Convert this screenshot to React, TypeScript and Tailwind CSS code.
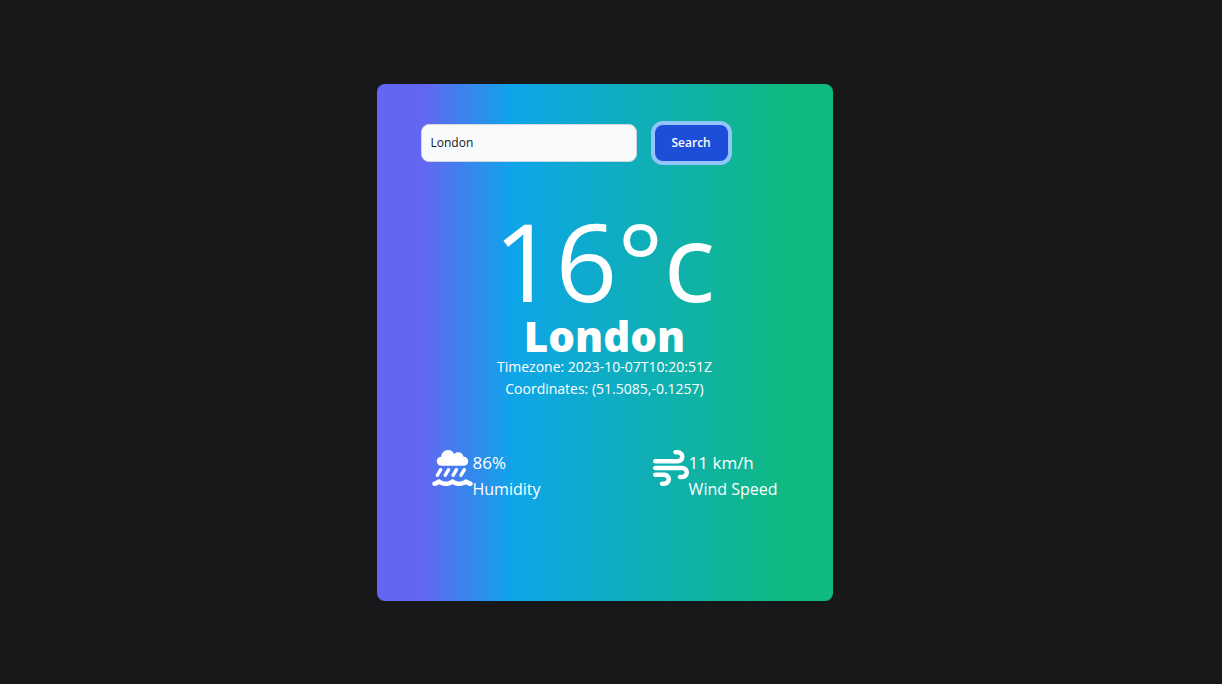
import { useState } from "react";
import { FaCloudShowersWater, FaWind } from "react-icons/fa6";
import type { IconType } from "react-icons";

type StatProps = { icon: IconType; iconClass: string; value: string; label: string };

function Stat({ icon: Icon, iconClass, value, label }: StatProps) {
  return (
    <div className="flex items-start">
      <Icon aria-hidden="true" className={iconClass} />
      <div className="text-base leading-[26px]">
        <p className="text-[17px]">{value}</p>
        <p>{label}</p>
      </div>
    </div>
  );
}

export default function App() {
  const [city, setCity] = useState("London");

  return (
    <main className="flex min-h-screen items-center justify-center bg-[#18181a] pr-[13px] font-['Open_Sans','Noto_Sans',sans-serif] text-white">
      <section className="w-full max-w-[456px] rounded-lg bg-linear-to-r/srgb from-[#6366f1] from-10% via-[#0ea5e9] via-30% to-[#10b981] to-90% px-11 pt-10 pb-[99px]">
        <form className="flex items-center gap-[18px]" onSubmit={(event) => event.preventDefault()}>
          <input
            type="text"
            aria-label="City"
            value={city}
            onChange={(event) => setCity(event.target.value)}
            className="h-[38px] w-[216px] rounded-lg border border-gray-300 bg-[#f9fafb] px-[9px] text-xs text-[#111827] outline-none"
          />
          <button
            type="submit"
            className="h-9 rounded-lg bg-[#1d4ed8] px-[17px] text-xs font-semibold text-white ring-4 ring-[#93c5fd]"
          >
            Search
          </button>
        </form>

        <div className="mt-[42px] text-center">
          <p className="text-[108px] leading-[114px]">16°c</p>
          <h1 className="pb-0.5 text-[42px] leading-9 font-extrabold">London</h1>
          <p className="text-sm leading-[22px]">Timezone: 2023-10-07T10:20:51Z</p>
          <p className="text-sm leading-[22px]">Coordinates: (51.5085,-0.1257)</p>
        </div>

        <div className="mt-[50px] flex justify-between px-[11px]">
          <Stat icon={FaCloudShowersWater} iconClass="h-9 w-[41px]" value="86%" label="Humidity" />
          <Stat icon={FaWind} iconClass="size-9" value="11 km/h" label="Wind Speed" />
        </div>
      </section>
    </main>
  );
}
